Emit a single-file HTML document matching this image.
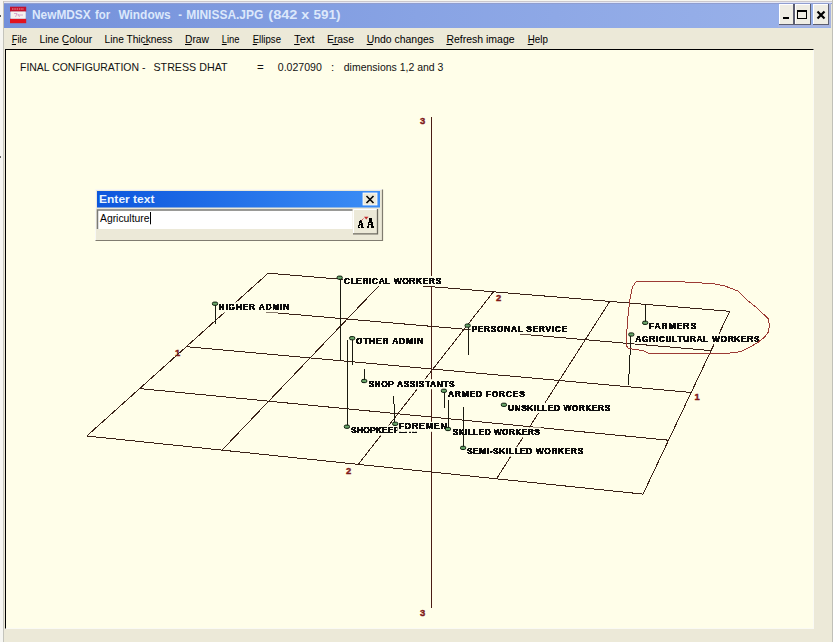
<!DOCTYPE html>
<html><head><meta charset="utf-8"><style>
html,body{margin:0;padding:0;}
body{width:833px;height:642px;overflow:hidden;position:relative;background:#ece9d8;font-family:"Liberation Sans",sans-serif;}
.abs{position:absolute;}
svg text{font-family:"Liberation Sans",sans-serif;}
.lb{font-size:8.4px;font-weight:bold;fill:#0c0c0c;}
.dg{font-size:9.4px;font-weight:bold;fill:#801818;stroke:#801818;stroke-width:0.4px;}
.mn{font-size:11px;fill:#000;}
.tt{font-size:13.4px;font-weight:bold;fill:#dce8fb;}
.hd{font-size:11.5px;fill:#111;}
</style></head><body>
<div class="abs" style="left:0;top:0;width:4px;height:642px;background:#f6f6f2;"></div>
<div class="abs" style="left:3px;top:0;width:1px;height:642px;background:#c4c4bc;"></div>
<div class="abs" style="left:0;top:0;width:833px;height:1px;background:#f6f6f0;"></div>
<div class="abs" style="left:4px;top:1px;width:829px;height:1px;background:#ccc8cc;"></div>
<div class="abs" style="left:4px;top:2px;width:829px;height:1px;background:#e2e6f6;"></div>
<div class="abs" style="left:4px;top:3px;width:829px;height:1px;background:#909ed0;"></div>
<div class="abs" style="left:832px;top:0;width:1px;height:642px;background:#c0c0b8;"></div>
<div class="abs" style="left:0;top:15px;width:1px;height:2px;background:#555;"></div>
<div class="abs" style="left:0;top:156px;width:1px;height:2px;background:#666;"></div>
<div class="abs" style="left:4px;top:4px;width:827px;height:23.5px;background:linear-gradient(to right,#7390da,#88a3e4 50%,#9ab2ea);"></div>
<div class="abs" style="left:5px;top:49px;width:807px;height:578px;background:#fffee9;border-top:1px solid #000;border-left:1px solid #000;border-right:1px solid #fafaf4;border-bottom:1px solid #fafaf4;"></div>
<svg class="abs" style="left:0;top:0" width="833" height="642" viewBox="0 0 833 642">
<!-- icon -->
<rect x="10" y="6.7" width="16.2" height="5" fill="#c4122c"/>
<rect x="10" y="18.7" width="16.2" height="4.5" fill="#e2121e"/>
<rect x="10.5" y="11.5" width="15.2" height="7.2" fill="#f6f2ee"/>
<path d="M12 9 H24" stroke="#f0a0a8" stroke-width="1" stroke-dasharray="1.5 0.8"/>
<path d="M14 13.5 H17 L15.5 17 M17.5 15 H23 M18 14 L19.5 17" stroke="#d8a0c8" stroke-width="0.9" fill="none"/>
<text x="32" y="19.4" class="tt" textLength="58.7" lengthAdjust="spacingAndGlyphs">NewMDSX</text><text x="95" y="19.4" class="tt" textLength="15.2" lengthAdjust="spacingAndGlyphs">for</text><text x="118.4" y="19.4" class="tt" textLength="52.2" lengthAdjust="spacingAndGlyphs">Windows</text><text x="178.2" y="19.4" class="tt" textLength="3.7" lengthAdjust="spacingAndGlyphs">-</text><text x="186.2" y="19.4" class="tt" textLength="77.1" lengthAdjust="spacingAndGlyphs">MINISSA.JPG</text><text x="268.3" y="19.4" class="tt" textLength="29.1" lengthAdjust="spacingAndGlyphs">(842</text><text x="301.3" y="19.4" class="tt" textLength="8.0" lengthAdjust="spacingAndGlyphs">x</text><text x="313.6" y="19.4" class="tt" textLength="27.0" lengthAdjust="spacingAndGlyphs">591)</text>
<!-- caption buttons -->
<g shape-rendering="crispEdges">
<rect x="829" y="3" width="2" height="24" fill="#a8b4e0"/>
<rect x="778" y="25" width="53" height="2" fill="#a8b4e0"/>
<rect x="779" y="4" width="15" height="21" fill="#efede4"/>
<rect x="795" y="4" width="16" height="21" fill="#efede4"/>
<rect x="812.5" y="4" width="16" height="21" fill="#efede4"/>
<path d="M779.5 24.5 V4.5 H793.5 M795.5 24.5 V4.5 H810.5 M813 24.5 V4.5 H828" fill="none" stroke="#ffffff" stroke-width="1"/>
<path d="M779 24.5 H794 V4 M795 24.5 H810.5 V4 M812.5 24.5 H828.5 V4" fill="none" stroke="#5c5e70" stroke-width="1.6"/>
<rect x="783" y="17" width="6" height="2" fill="#000"/>
<rect x="797.5" y="10.5" width="9" height="8" fill="none" stroke="#000" stroke-width="1.2"/>
<rect x="797" y="10" width="10" height="2" fill="#000"/>
</g>
<path d="M817.5 11.5 L824.5 18.5 M824.5 11.5 L817.5 18.5" stroke="#000" stroke-width="2.2"/>
<text x="11.8" y="43" class="mn" textLength="15.099999999999998" lengthAdjust="spacingAndGlyphs">File</text><rect x="11.8" y="44" width="4.2" height="1" fill="#000"/><text x="39.5" y="43" class="mn" textLength="52.599999999999994" lengthAdjust="spacingAndGlyphs">Line Colour</text><rect x="63.4" y="44" width="5.3" height="1" fill="#000"/><text x="104.6" y="43" class="mn" textLength="67.70000000000002" lengthAdjust="spacingAndGlyphs">Line Thickness</text><rect x="143.3" y="44" width="5.3" height="1" fill="#000"/><text x="185" y="43" class="mn" textLength="24" lengthAdjust="spacingAndGlyphs">Draw</text><rect x="185.0" y="44" width="6.6" height="1" fill="#000"/><text x="221.8" y="43" class="mn" textLength="17.69999999999999" lengthAdjust="spacingAndGlyphs">Line</text><rect x="221.8" y="44" width="4.9" height="1" fill="#000"/><text x="252.7" y="43" class="mn" textLength="28.30000000000001" lengthAdjust="spacingAndGlyphs">Ellipse</text><rect x="252.7" y="44" width="4.4" height="1" fill="#000"/><text x="294.1" y="43" class="mn" textLength="20.5" lengthAdjust="spacingAndGlyphs">Text</text><rect x="294.1" y="44" width="5.6" height="1" fill="#000"/><text x="327" y="43" class="mn" textLength="27" lengthAdjust="spacingAndGlyphs">Erase</text><rect x="332.4" y="44" width="5.9" height="1" fill="#000"/><text x="366.7" y="43" class="mn" textLength="67.30000000000001" lengthAdjust="spacingAndGlyphs">Undo changes</text><rect x="366.7" y="44" width="6.2" height="1" fill="#000"/><text x="446.4" y="43" class="mn" textLength="68.20000000000005" lengthAdjust="spacingAndGlyphs">Refresh image</text><rect x="446.4" y="44" width="5.8" height="1" fill="#000"/><text x="527.7" y="43" class="mn" textLength="20.199999999999932" lengthAdjust="spacingAndGlyphs">Help</text><rect x="527.7" y="44" width="5.6" height="1" fill="#000"/>
<text x="20" y="70.5" class="hd" textLength="125.4" lengthAdjust="spacingAndGlyphs">FINAL CONFIGURATION -</text>
<text x="153.5" y="70.5" class="hd" textLength="74" lengthAdjust="spacingAndGlyphs">STRESS DHAT</text>
<text x="257" y="70.5" class="hd">=</text>
<text x="277.8" y="70.5" class="hd" textLength="44" lengthAdjust="spacingAndGlyphs">0.027090</text>
<text x="331" y="70.5" class="hd">:</text>
<text x="343.8" y="70.5" class="hd" textLength="99.6" lengthAdjust="spacingAndGlyphs">dimensions 1,2 and 3</text>
<defs><filter id="bin" filterUnits="userSpaceOnUse" x="0" y="0" width="833" height="642"><feComponentTransfer><feFuncA type="discrete" tableValues="0 1 1 1 1 1 1 1"/></feComponentTransfer></filter></defs><text x="420" y="124" class="dg">3</text>
<text x="420" y="615.6" class="dg">3</text>
<text x="175" y="356" class="dg">1</text>
<text x="694.5" y="400" class="dg">1</text>
<text x="346" y="474" class="dg">2</text>
<text x="496" y="300.5" class="dg">2</text>
<line x1="268.2" y1="273.2" x2="729.7" y2="311.3" stroke="#3a2218" stroke-width="1" shape-rendering="crispEdges"/>
<line x1="229.2" y1="308.8" x2="711" y2="350.6" stroke="#3a2218" stroke-width="1" shape-rendering="crispEdges"/>
<line x1="186.5" y1="346.7" x2="691.3" y2="392.5" stroke="#3a2218" stroke-width="1" shape-rendering="crispEdges"/>
<line x1="140" y1="388.6" x2="668.4" y2="440.2" stroke="#3a2218" stroke-width="1" shape-rendering="crispEdges"/>
<line x1="86.8" y1="436" x2="643" y2="494.1" stroke="#3a2218" stroke-width="1" shape-rendering="crispEdges"/>
<line x1="268.2" y1="273.2" x2="86.8" y2="436" stroke="#3a2218" stroke-width="1" shape-rendering="crispEdges"/>
<line x1="382" y1="282.6" x2="222" y2="450.1" stroke="#3a2218" stroke-width="1" shape-rendering="crispEdges"/>
<line x1="493.3" y1="292" x2="358.5" y2="464" stroke="#3a2218" stroke-width="1" shape-rendering="crispEdges"/>
<line x1="609.7" y1="301.5" x2="497.3" y2="477.5" stroke="#3a2218" stroke-width="1" shape-rendering="crispEdges"/>
<line x1="729.7" y1="311.3" x2="643" y2="494.1" stroke="#3a2218" stroke-width="1" shape-rendering="crispEdges"/>
<line x1="431.5" y1="116.5" x2="431.5" y2="607.5" stroke="#4a1c14" stroke-width="1" shape-rendering="crispEdges"/>
<rect x="217.6" y="302.4" width="72.79999999999998" height="10" fill="#fffee9"/>
<line x1="215.2" y1="305" x2="215.2" y2="323.7" stroke="#1a1a10" stroke-width="1" shape-rendering="crispEdges"/>
<rect x="212.4" y="302.1" width="5.2" height="3.2" rx="1.4" ry="1.4" fill="#6aa66a" stroke="#0c1c0c" stroke-width="1"/>
<text x="218.6" y="310.0" class="lb" filter="url(#bin)" textLength="70.79999999999998" lengthAdjust="spacing">HIGHER ADMIN</text>
<rect x="343" y="276" width="99" height="10" fill="#fffee9"/>
<line x1="340.5" y1="279" x2="340.5" y2="360.3" stroke="#1a1a10" stroke-width="1" shape-rendering="crispEdges"/>
<rect x="337.1" y="276.1" width="5.2" height="3.2" rx="1.4" ry="1.4" fill="#6aa66a" stroke="#0c1c0c" stroke-width="1"/>
<text x="344" y="283.6" class="lb" filter="url(#bin)" textLength="97" lengthAdjust="spacing">CLERICAL WORKERS</text>
<rect x="470.6" y="324.2" width="97.39999999999998" height="10" fill="#fffee9"/>
<line x1="468.4" y1="327" x2="468.4" y2="355.3" stroke="#1a1a10" stroke-width="1" shape-rendering="crispEdges"/>
<rect x="465.1" y="324.0" width="5.2" height="3.2" rx="1.4" ry="1.4" fill="#6aa66a" stroke="#0c1c0c" stroke-width="1"/>
<text x="471.6" y="331.8" class="lb" filter="url(#bin)" textLength="95.39999999999998" lengthAdjust="spacing">PERSONAL SERVICE</text>
<rect x="354.9" y="336.6" width="69.30000000000001" height="10" fill="#fffee9"/>
<line x1="352.3" y1="340" x2="352.3" y2="364.6" stroke="#1a1a10" stroke-width="1" shape-rendering="crispEdges"/>
<rect x="349.6" y="336.6" width="5.2" height="3.2" rx="1.4" ry="1.4" fill="#6aa66a" stroke="#0c1c0c" stroke-width="1"/>
<text x="355.9" y="344.20000000000005" class="lb" filter="url(#bin)" textLength="67.30000000000001" lengthAdjust="spacing">OTHER ADMIN</text>
<rect x="350.1" y="425.4" width="67.89999999999998" height="10" fill="#fffee9"/>
<line x1="347.6" y1="340" x2="347.6" y2="425" stroke="#1a1a10" stroke-width="1" shape-rendering="crispEdges"/>
<rect x="344.3" y="425.1" width="5.2" height="3.2" rx="1.4" ry="1.4" fill="#6aa66a" stroke="#0c1c0c" stroke-width="1"/>
<text x="351.1" y="433.0" class="lb" filter="url(#bin)" textLength="65.89999999999998" lengthAdjust="spacing">SHOPKEEPERS</text>
<rect x="367.4" y="379.2" width="88.20000000000005" height="10" fill="#fffee9"/>
<line x1="364.5" y1="369" x2="364.5" y2="380" stroke="#1a1a10" stroke-width="1" shape-rendering="crispEdges"/>
<rect x="361.6" y="379.4" width="5.2" height="3.2" rx="1.4" ry="1.4" fill="#6aa66a" stroke="#0c1c0c" stroke-width="1"/>
<text x="368.4" y="386.8" class="lb" filter="url(#bin)" textLength="86.20000000000005" lengthAdjust="spacing">SHOP ASSISTANTS</text>
<rect x="397.4" y="421.8" width="50.30000000000001" height="10" fill="#fffee9"/>
<line x1="393.6" y1="396" x2="394.9" y2="422" stroke="#1a1a10" stroke-width="1" shape-rendering="crispEdges"/>
<rect x="392.6" y="422.2" width="5.2" height="3.2" rx="1.4" ry="1.4" fill="#6aa66a" stroke="#0c1c0c" stroke-width="1"/>
<text x="398.4" y="429.40000000000003" class="lb" filter="url(#bin)" textLength="48.30000000000001" lengthAdjust="spacing">FOREMEN</text>
<rect x="447" y="389.4" width="78.79999999999995" height="10" fill="#fffee9"/>
<line x1="444.4" y1="392" x2="444.4" y2="407.6" stroke="#1a1a10" stroke-width="1" shape-rendering="crispEdges"/>
<rect x="441.3" y="389.2" width="5.2" height="3.2" rx="1.4" ry="1.4" fill="#6aa66a" stroke="#0c1c0c" stroke-width="1"/>
<text x="448" y="397.0" class="lb" filter="url(#bin)" textLength="76.79999999999995" lengthAdjust="spacing">ARMED FORCES</text>
<rect x="451.5" y="427.4" width="89.39999999999998" height="10" fill="#fffee9"/>
<line x1="448.4" y1="400" x2="448.4" y2="428" stroke="#1a1a10" stroke-width="1" shape-rendering="crispEdges"/>
<rect x="445.4" y="427.4" width="5.2" height="3.2" rx="1.4" ry="1.4" fill="#6aa66a" stroke="#0c1c0c" stroke-width="1"/>
<text x="452.5" y="435.0" class="lb" filter="url(#bin)" textLength="87.39999999999998" lengthAdjust="spacing">SKILLED WORKERS</text>
<rect x="465.9" y="446.6" width="118.20000000000005" height="10" fill="#fffee9"/>
<line x1="463.4" y1="407" x2="463.4" y2="446" stroke="#1a1a10" stroke-width="1" shape-rendering="crispEdges"/>
<rect x="460.5" y="446.3" width="5.2" height="3.2" rx="1.4" ry="1.4" fill="#6aa66a" stroke="#0c1c0c" stroke-width="1"/>
<text x="466.9" y="454.20000000000005" class="lb" filter="url(#bin)" textLength="116.20000000000005" lengthAdjust="spacing">SEMI-SKILLED WORKERS</text>
<rect x="507" y="403" width="104.20000000000005" height="10" fill="#fffee9"/>
<rect x="501.3" y="403.2" width="5.2" height="3.2" rx="1.4" ry="1.4" fill="#6aa66a" stroke="#0c1c0c" stroke-width="1"/>
<text x="508" y="410.6" class="lb" filter="url(#bin)" textLength="102.20000000000005" lengthAdjust="spacing">UNSKILLED WORKERS</text>
<rect x="647.8" y="321.4" width="49.200000000000045" height="10" fill="#fffee9"/>
<line x1="645.2" y1="304.4" x2="645.2" y2="322" stroke="#1a1a10" stroke-width="1" shape-rendering="crispEdges"/>
<rect x="642.6" y="321.2" width="5.2" height="3.2" rx="1.4" ry="1.4" fill="#6aa66a" stroke="#0c1c0c" stroke-width="1"/>
<text x="648.8" y="329.0" class="lb" filter="url(#bin)" textLength="47.200000000000045" lengthAdjust="spacing">FARMERS</text>
<rect x="634.3" y="334" width="126.30000000000007" height="10" fill="#fffee9"/>
<line x1="631" y1="336" x2="628.4" y2="385.5" stroke="#1a1a10" stroke-width="1" shape-rendering="crispEdges"/>
<rect x="628.7" y="332.9" width="5.2" height="3.2" rx="1.4" ry="1.4" fill="#6aa66a" stroke="#0c1c0c" stroke-width="1"/>
<text x="635.3" y="341.6" class="lb" filter="url(#bin)" textLength="124.30000000000007" lengthAdjust="spacing">AGRICULTURAL WORKERS</text>
<polygon points="636,281.9 657,281.4 685,282 712.6,283.6 725.2,286.1 737.8,291 746.2,299.4 756,307.1 768.6,319 769.3,326 768.6,331.6 764.4,337.2 757.4,342.8 747.6,348.4 740.6,351.7 728,353.3 700,354 671,353.4 648.7,353.4 643,350.6 628.3,348.5 626.5,345.7 627,329 628.3,312 630.4,296.6 632.5,286.8" fill="none" stroke="#9c3a34" stroke-width="1" stroke-linejoin="round" shape-rendering="crispEdges"/>
<!-- dialog -->
<rect x="95.5" y="189.5" width="287" height="51" fill="#ece9d8" stroke="#f8f8f4" stroke-width="1"/>
<path d="M95.5 240.5 H382.5 V189.5" fill="none" stroke="#807c70" stroke-width="1.2"/>
<defs><linearGradient id="tg" x1="0" x2="1"><stop offset="0" stop-color="#0c56dc"/><stop offset="1" stop-color="#3c8ef6"/></linearGradient></defs>
<rect x="97" y="191" width="283" height="16.5" fill="url(#tg)"/>
<text x="99" y="203.3" style="font-size:11.2px;font-weight:bold;fill:#e8f4ff" textLength="55.5" lengthAdjust="spacingAndGlyphs">Enter text</text>
<rect x="363" y="193" width="14" height="12" fill="#ece9d8" stroke="#fff" stroke-width="0.8"/>
<path d="M366.5 196 L373.5 203 M373.5 196 L366.5 203" stroke="#000" stroke-width="1.6"/>
<rect x="97" y="209.5" width="255.5" height="19.5" fill="#fff"/>
<path d="M97.5 229 V210 H352.5" fill="none" stroke="#7a7a76" stroke-width="1.5"/>
<text x="100" y="222.4" style="font-size:11px;fill:#000" textLength="49.5" lengthAdjust="spacingAndGlyphs">Agriculture</text>
<rect x="150" y="212" width="1" height="12.3" fill="#000"/>
<rect x="353" y="209" width="24.5" height="25" fill="#ece9d8"/>
<path d="M353.5 233.5 V209.5 H377" fill="none" stroke="#fff" stroke-width="1"/>
<path d="M353 233.8 H377.5 V209" fill="none" stroke="#6c6a60" stroke-width="1.3"/>
<text x="357.8" y="227.8" style="font-family:'Liberation Serif',serif;font-size:11.5px;font-weight:bold;fill:#000" filter="url(#bin)" textLength="6" lengthAdjust="spacingAndGlyphs">A</text>
<text x="367" y="227.8" style="font-family:'Liberation Serif',serif;font-size:15.5px;font-weight:bold;fill:#000" filter="url(#bin)" textLength="7" lengthAdjust="spacingAndGlyphs">A</text>
<path d="M364 216.8 H368.5 L366.2 219.6 Z" fill="#c02828"/>
<path d="M361.5 220.5 L363.5 218.5" stroke="#d06060" stroke-width="1"/>
</svg>
</body></html>
